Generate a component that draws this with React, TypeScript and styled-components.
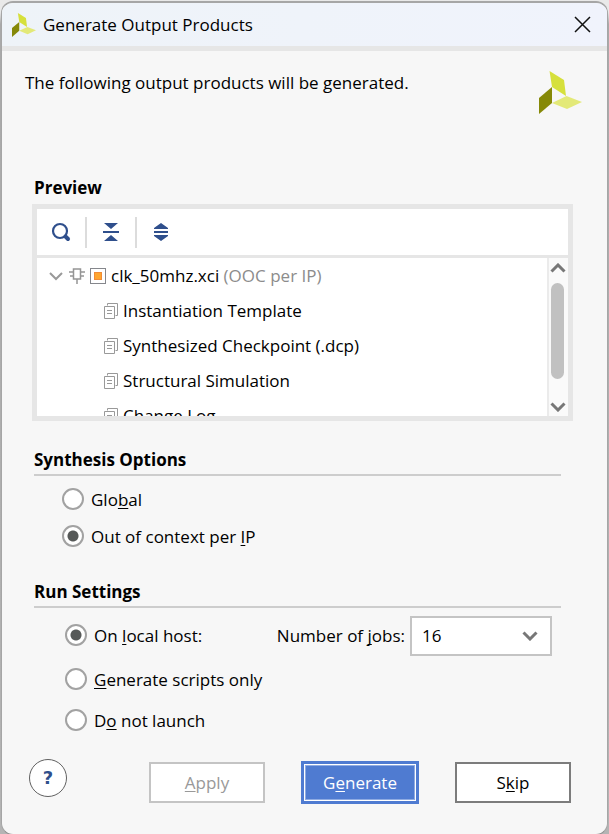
import React, { useState } from "react";
import styled, { createGlobalStyle, css } from "styled-components";

const GlobalStyle = createGlobalStyle`
  *, *::before, *::after { box-sizing: border-box; }
  body { margin: 0; background: #b4b4b4; }
  body, button, select, input {
    font-family: "Open Sans", "Noto Sans", sans-serif;
    font-size: 17px;
    line-height: 24px;
    color: #000;
  }
`;

const Desktop = styled.div`
  display: flex;
  min-height: 100vh;
  padding: 1px 1px 0;
  background: linear-gradient(to bottom, #e9e9e9 0, #e9e9e9 12px, #a9a9a9 24px, #b4b4b4 100%);
`;

const Dialog = styled.section`
  flex: 1;
  display: flex;
  flex-direction: column;
  min-width: 0;
  overflow: hidden;
  border: 1px solid #a6a6a6;
  border-top-width: 2px;
  border-bottom-color: #8c8c8c;
  border-radius: 12px;
  background: #f7f7f7;
`;

const TitleBar = styled.header`
  display: flex;
  align-items: center;
  height: 48px;
  padding: 0 16px 0 10px;
  gap: 7px;
  border-bottom: 5px solid #e6e6e6;
  background: linear-gradient(to right, #eef3f8, #f0f3fc);
`;

const Title = styled.h1`
  flex: 1;
  margin: 0;
  font-size: 17px;
  font-weight: 400;
`;

const CloseButton = styled.button`
  display: flex;
  padding: 0;
  border: 0;
  background: none;
`;

const Intro = styled.div`
  display: flex;
  justify-content: space-between;
  align-items: flex-start;
  padding: 20px 25px 0 23px;
`;

const Message = styled.p`
  margin: 0;
`;

const Content = styled.main`
  padding: 62px 34px 0 30px;
`;

const Heading = styled.h2`
  margin: 0;
  padding-left: 2px;
  font-size: 17px;
  font-weight: 700;
`;

const Preview = styled.div`
  margin-top: 4px;
  border: 5px solid #e6e6e6;
  background: #fff;
`;

const Toolbar = styled.div`
  display: flex;
  align-items: center;
  height: 49px;
  border-bottom: 3px solid #e6e6e6;
`;

const ToolButton = styled.button`
  display: flex;
  align-items: center;
  justify-content: center;
  width: 50px;
  height: 31px;
  padding: 0;
  border: 0;
  background: none;

  &:first-child { width: 48px; }
  & + & { border-left: 2px solid #dcdcdc; }
`;

const TreeViewport = styled.div`
  display: flex;
  height: 158px;
  overflow: hidden;
`;

const Tree = styled.ul`
  flex: 1;
  margin: 0;
  padding: 0;
  list-style: none;
`;

const TreeRow = styled.li<{ $child?: boolean }>`
  display: flex;
  align-items: center;
  gap: 5px;
  height: 35px;
  padding-left: ${(p) => (p.$child ? 67 : 11)}px;
  white-space: pre;
`;

const Muted = styled.span`
  color: #8c8c8c;
`;

const ScrollBar = styled.div`
  display: flex;
  flex-direction: column;
  align-items: center;
  justify-content: space-between;
  width: 21px;
  padding: 5px 2px 4px 0;
  border-left: 2px solid #ebebeb;
  background: #fafafa;
`;

const Thumb = styled.div`
  width: 13px;
  height: 96px;
  margin-bottom: 14px;
  border-radius: 7px;
  background: #c1c1c1;
`;

const Group = styled.fieldset<{ $gap: number }>`
  display: block;
  min-width: 0;
  margin: ${(p) => p.$gap}px 12px 0 2px;
  padding: 0;
  border: 0;
`;

const Legend = styled.legend`
  display: block;
  width: 100%;
  padding: 0 0 2px;
  border-bottom: 2px solid #cdcdcd;
  font-weight: 700;
`;

const Options = styled.div<{ $indent: number }>`
  display: flex;
  flex-direction: column;
  padding: 5px 9px 0 ${(p) => p.$indent}px;
`;

const OptionRow = styled.div<{ $height: number }>`
  display: flex;
  align-items: center;
  justify-content: space-between;
  height: ${(p) => p.$height}px;
`;

const RadioLabel = styled.label`
  display: flex;
  align-items: center;
  gap: 7px;
`;

const Radio = styled.input`
  appearance: none;
  flex: none;
  width: 22px;
  height: 22px;
  margin: 0 0 2px;
  border: 2px solid #a2a2a2;
  border-radius: 50%;
  background: #fff;

  &:checked { background: radial-gradient(circle, #565958 5px, #fff 6px); }
`;

const Key = styled.span`
  text-decoration: underline;
  text-decoration-thickness: 1px;
  text-underline-offset: 2px;
  text-decoration-skip-ink: none;
`;

const Jobs = styled.div`
  display: flex;
  align-items: center;
  gap: 5px;
`;

const SelectBox = styled.div`
  display: grid;
  align-items: center;
  width: 142px;

  > * { grid-area: 1 / 1; }
  > svg { justify-self: end; margin-right: 14px; pointer-events: none; }
`;

const Select = styled.select`
  appearance: none;
  width: 100%;
  height: 40px;
  padding: 0 10px;
  border: 2px solid #c4c4c4;
  border-radius: 0;
  background: #fff;
`;

const Footer = styled.footer`
  display: flex;
  align-items: center;
  justify-content: space-between;
  padding: 18px 36px 28px 27px;
`;

const HelpButton = styled.button`
  width: 38px;
  height: 38px;
  margin: 0 0 9px;
  padding: 0;
  border: 1px solid #606060;
  border-radius: 50%;
  background: #fff;
  color: #2f4f8c;
  font-family: "DejaVu Sans", sans-serif;
  font-size: 18px;
  font-weight: 700;
`;

const Actions = styled.div`
  display: flex;
  align-items: center;
  gap: 36px;
`;

const ActionButton = styled.button<{ $primary?: boolean }>`
  width: 116px;
  height: 41px;
  padding: 0;
  border: 2px solid #7c7c7c;
  background: #fff;

  &:disabled { border-color: #c4c4c4; color: #999; }

  ${(p) =>
    p.$primary &&
    css`
      width: 118px;
      height: 43px;
      border: 3px solid #4f7bd1;
      background: #4f7bd1;
      box-shadow: inset 0 0 0 1px #fff, inset 0 0 0 2px #8fabe2;
      color: #fff;
    `}
`;

const Logo = ({ size }: { size: number }) => (
  <svg width={size} height={size} viewBox="0 0 43 43" aria-hidden="true">
    <path d="M10.500 0L25 9L27 25L13 16Z" fill="#d6e03c" />
    <path d="M0 27L13 16V32L0 43Z" fill="#868908" />
    <path d="M13 32L27.500 25L43 31L28 38Z" fill="#e3e978" />
  </svg>
);

const SearchIcon = () => (
  <svg width="20" height="20" viewBox="0 0 20 20" fill="none" stroke="#2f4f8c">
    <circle cx="9" cy="9" r="7" strokeWidth="2.200" />
    <path d="M14.500 14.500L17 17" strokeWidth="4" strokeLinecap="round" />
  </svg>
);

const CollapseIcon = () => (
  <svg width="16" height="18" viewBox="0 0 16 18" fill="#2f4f8c">
    <path d="M1 0H15L8 6ZM0 8H16V10H0ZM8 12L15 18H1Z" />
  </svg>
);

const ExpandIcon = () => (
  <svg width="16" height="18" viewBox="0 0 16 18" fill="#2f4f8c">
    <path d="M8 0L15 5V6H1V5ZM1 8H15V10H1ZM1 12H15V13L8 18L1 13Z" />
  </svg>
);

const Chevron = ({ up, thin }: { up?: boolean; thin?: boolean }) => (
  <svg width="16" height="10" viewBox="0 0 16 10" fill="none">
    <path
      d={up ? "M1.500 8.500L8 2L14.500 8.500" : thin ? "M2 2L8 8L14 2" : "M1.500 1.500L8 8L14.500 1.500"}
      stroke={thin ? "#999" : "#777"}
      strokeWidth={thin ? 2 : 3}
    />
  </svg>
);

const IpIcon = () => (
  <svg width="16" height="18" viewBox="0 0 16 18" fill="none" stroke="#959595" strokeWidth="1.500">
    <path d="M4.500 2H11.500V12H4.500ZM0 5H4M1 9H4M12 5H16M12 9H15M8 12V17" />
  </svg>
);

const CoreIcon = () => (
  <svg width="16" height="16" viewBox="0 0 16 16">
    <rect x="0.500" y="0.500" width="15" height="15" fill="#fff" stroke="#85878c" />
    <rect x="4.500" y="4.500" width="7" height="7" fill="#ffa62f" stroke="#f18b37" />
  </svg>
);

const FilesIcon = () => (
  <svg width="14" height="16" viewBox="0 0 14 16" fill="none" stroke="#999">
    <path d="M3.500 2.500V0.500H13.500V12.500H11.500M0.500 3.500H10.500V15.500H0.500ZM3 7.500H8M3 10.500H8" />
  </svg>
);

const outputs = [
  "Instantiation Template",
  "Synthesized Checkpoint (.dcp)",
  "Structural Simulation",
  "Change Log",
];

export default function App() {
  const [synthesis, setSynthesis] = useState("ooc");
  const [run, setRun] = useState("local");

  return (
    <>
      <GlobalStyle />
      <Desktop>
        <Dialog role="dialog" aria-labelledby="dialog-title">
          <TitleBar>
            <Logo size={24} />
            <Title id="dialog-title">Generate Output Products</Title>
            <CloseButton aria-label="Close">
              <svg width="17" height="17" viewBox="0 0 17 17" stroke="#111" strokeWidth="1.500">
                <path d="M1 1L16 16M16 1L1 16" />
              </svg>
            </CloseButton>
          </TitleBar>

          <Intro>
            <Message>The following output products will be generated.</Message>
            <Logo size={43} />
          </Intro>

          <Content>
            <Heading>Preview</Heading>
            <Preview>
              <Toolbar>
                <ToolButton aria-label="Search"><SearchIcon /></ToolButton>
                <ToolButton aria-label="Collapse all"><CollapseIcon /></ToolButton>
                <ToolButton aria-label="Expand all"><ExpandIcon /></ToolButton>
              </Toolbar>
              <TreeViewport>
                <Tree>
                  <TreeRow>
                    <Chevron thin />
                    <IpIcon />
                    <CoreIcon />
                    <span>clk_50mhz.xci <Muted>(OOC per IP)</Muted></span>
                  </TreeRow>
                  {outputs.map((name) => (
                    <TreeRow key={name} $child>
                      <FilesIcon />
                      <span>{name}</span>
                    </TreeRow>
                  ))}
                </Tree>
                <ScrollBar aria-hidden="true">
                  <Chevron up />
                  <Thumb />
                  <Chevron />
                </ScrollBar>
              </TreeViewport>
            </Preview>

            <Group $gap={27}>
              <Legend>Synthesis Options</Legend>
              <Options $indent={28}>
                <OptionRow $height={37}>
                  <RadioLabel>
                    <Radio type="radio" name="synthesis" checked={synthesis === "global"} onChange={() => setSynthesis("global")} />
                    <span>Glo<Key>b</Key>al</span>
                  </RadioLabel>
                </OptionRow>
                <OptionRow $height={37}>
                  <RadioLabel>
                    <Radio type="radio" name="synthesis" checked={synthesis === "ooc"} onChange={() => setSynthesis("ooc")} />
                    <span>Out of context per <Key>I</Key>P</span>
                  </RadioLabel>
                </OptionRow>
              </Options>
            </Group>

            <Group $gap={25}>
              <Legend>Run Settings</Legend>
              <Options $indent={31}>
                <OptionRow $height={46}>
                  <RadioLabel>
                    <Radio type="radio" name="run" checked={run === "local"} onChange={() => setRun("local")} />
                    <span>On <Key>l</Key>ocal host:</span>
                  </RadioLabel>
                  <Jobs>
                    <label htmlFor="jobs">Number of <Key>j</Key>obs:</label>
                    <SelectBox>
                      <Select id="jobs" defaultValue="16">
                        {["1", "2", "4", "8", "16"].map((n) => <option key={n}>{n}</option>)}
                      </Select>
                      <Chevron />
                    </SelectBox>
                  </Jobs>
                </OptionRow>
                <OptionRow $height={41}>
                  <RadioLabel>
                    <Radio type="radio" name="run" checked={run === "scripts"} onChange={() => setRun("scripts")} />
                    <span><Key>G</Key>enerate scripts only</span>
                  </RadioLabel>
                </OptionRow>
                <OptionRow $height={41}>
                  <RadioLabel>
                    <Radio type="radio" name="run" checked={run === "none"} onChange={() => setRun("none")} />
                    <span>D<Key>o</Key> not launch</span>
                  </RadioLabel>
                </OptionRow>
              </Options>
            </Group>
          </Content>

          <Footer>
            <HelpButton aria-label="Help">?</HelpButton>
            <Actions>
              <ActionButton disabled><Key>A</Key>pply</ActionButton>
              <ActionButton $primary>G<Key>e</Key>nerate</ActionButton>
              <ActionButton>S<Key>k</Key>ip</ActionButton>
            </Actions>
          </Footer>
        </Dialog>
      </Desktop>
    </>
  );
}
